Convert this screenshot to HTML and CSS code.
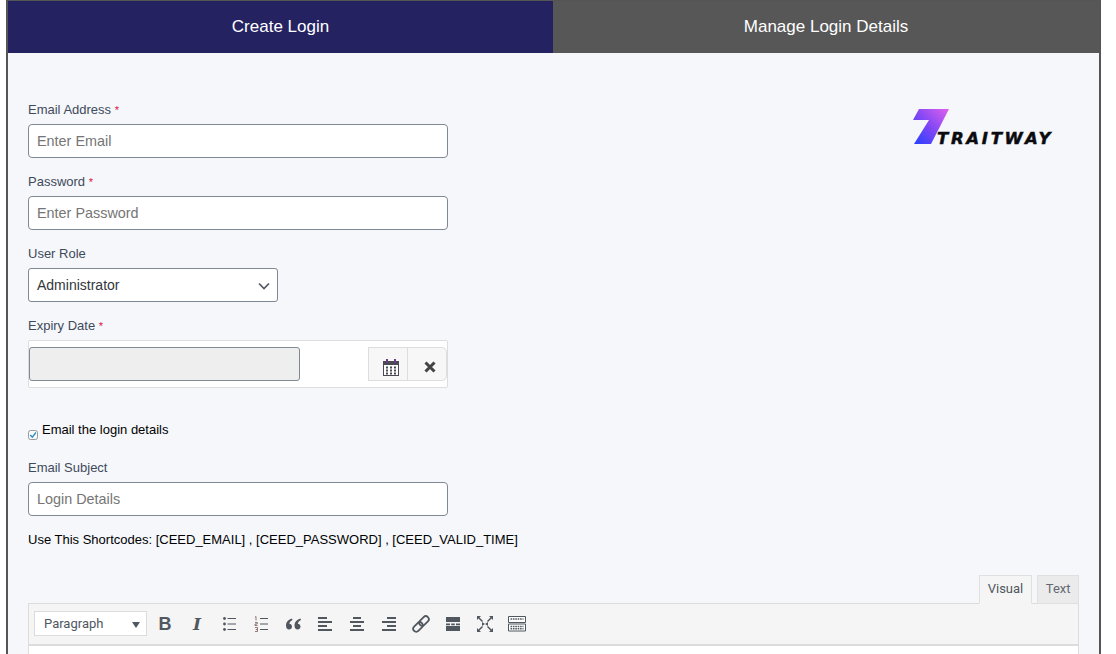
FILE: index.html
```html
<!DOCTYPE html>
<html lang="en">
<head>
<meta charset="utf-8">
<title>Create Login</title>
<link rel="stylesheet" href="styles.css">
</head>
<body>
<div class="panel">
  <nav class="tabs">
    <a class="tab tab-active">Create Login</a>
    <a class="tab">Manage Login Details</a>
  </nav>
  <main class="content">
    <div class="top">
      <form class="form">
        <div class="field">
          <label class="label">Email Address <span class="req">*</span></label>
          <input class="input" type="text" placeholder="Enter Email">
        </div>
        <div class="field">
          <label class="label">Password <span class="req">*</span></label>
          <input class="input" type="text" placeholder="Enter Password">
        </div>
        <div class="field">
          <label class="label">User Role</label>
          <div class="select">Administrator
            <svg class="chev" width="12" height="8" viewBox="0 0 12 8"><path d="M1 1.500l5 5 5-5" fill="none" stroke="#50575e" stroke-width="1.600"/></svg>
          </div>
        </div>
        <div class="field field-date">
          <label class="label">Expiry Date <span class="req">*</span></label>
          <div class="date">
            <input class="date-input" type="text" disabled>
            <div class="date-btns">
              <span class="date-btn">
                <svg width="16" height="18" viewBox="0 0 16 18"><path d="M0 3h16v15H0z" fill="#4a4a55"/><path d="M1 7h14v10H1z" fill="#fff"/><path d="M4 1v4M12 1v4" stroke="#6b3a80" stroke-width="2"/><path d="M3 8.500h2v2H3zM7 8.500h2v2H7zM11 8.500h2v2h-2zM3 11.500h2v2H3zM7 11.500h2v2H7zM11 11.500h2v2h-2zM3 14.500h2v2H3zM7 14.500h2v2H7zM11 14.500h2v2h-2z" fill="#4a4a55"/></svg>
              </span>
              <span class="date-btn">
                <svg width="12" height="12" viewBox="0 0 12 12"><path d="M1.500 1.500l9 9M10.500 1.500l-9 9" stroke="#444" stroke-width="3"/></svg>
              </span>
            </div>
          </div>
        </div>
        <div class="check-row">
          <svg class="check" width="10" height="10" viewBox="0 0 11 11"><rect x=".5" y=".5" width="10" height="10" rx="2.500" fill="#f8f9fb" stroke="#8c8f94"/><path d="M2.500 5.500l2.200 2.300 4-5" fill="none" stroke="#2f8fc0" stroke-width="1.500"/></svg>
          <span class="check-text">Email the login details</span>
        </div>
        <div class="field">
          <label class="label">Email Subject</label>
          <input class="input" type="text" placeholder="Login Details">
        </div>
        <p class="shortcodes">Use This Shortcodes: [CEED_EMAIL] , [CEED_PASSWORD] , [CEED_VALID_TIME]</p>
      </form>
      <div class="logo">
        <svg class="logo-mark" width="38" height="38" viewBox="0 0 38 38">
          <defs><linearGradient id="lg" x1="1" y1="0" x2="0" y2="1"><stop offset="0" stop-color="#e062ee"/><stop offset=".55" stop-color="#7a45f5"/><stop offset="1" stop-color="#2340ff"/></linearGradient></defs>
          <path d="M7 1h30L19 36H2L17 12H1z" fill="url(#lg)"/>
        </svg>
        <span class="logo-text">TRAITWAY</span>
      </div>
    </div>
    <section class="editor">
      <div class="ed-tabs">
        <span class="ed-tab ed-tab-active">Visual</span>
        <span class="ed-tab">Text</span>
      </div>
      <div class="toolbar">
        <div class="format">Paragraph<span class="format-arrow"></span></div>
        <span class="tool tool-b">B</span>
        <span class="tool tool-i">I</span>
        <span class="tool"><svg width="20" height="20" viewBox="0 0 20 20"><path d="M8.500 4.500H17M8.500 10H17M8.500 15.500H17" stroke="#50575e"/><circle cx="5.500" cy="4.500" r="1.400" fill="#50575e"/><circle cx="5.500" cy="10" r="1.400" fill="#50575e"/><circle cx="5.500" cy="15.500" r="1.400" fill="#50575e"/></svg></span>
        <span class="tool"><svg width="20" height="20" viewBox="0 0 20 20"><path d="M9 4.500h8M9 10h8M9 15.500h8" stroke="#50575e"/><path d="M5 2.500v4M4 3.200l1-.7M4 8.500h2.300v1.500H4v1.500h2.500M4 13.500h2.500v4H4M4.800 15.500h1.700" fill="none" stroke="#7a5a55" stroke-width=".8"/></svg></span>
        <span class="tool"><svg width="20" height="20" viewBox="0 0 20 20"><path d="M9 4.500C5.500 5.500 3 8 3 11.500 3 14 4.300 15.500 6 15.500s3-1.300 3-3-1.200-2.800-2.700-2.800C6.700 8 7.800 6.800 9.500 6zM17.500 4.500C14 5.500 11.500 8 11.500 11.500c0 2.500 1.300 4 3 4s3-1.300 3-3-1.200-2.800-2.700-2.800c.4-1.700 1.500-2.900 3.200-3.700z" fill="#50575e"/></svg></span>
        <span class="tool"><svg width="20" height="20" viewBox="0 0 20 20"><path d="M3 3h9v2H3zM3 7h14v2H3zM3 11h9v2H3zM3 15h14v2H3z" fill="#50575e"/></svg></span>
        <span class="tool"><svg width="20" height="20" viewBox="0 0 20 20"><path d="M6 3h8v2H6zM3 7h14v2H3zM6 11h8v2H6zM3 15h14v2H3z" fill="#50575e"/></svg></span>
        <span class="tool"><svg width="20" height="20" viewBox="0 0 20 20"><path d="M8 3h9v2H8zM3 7h14v2H3zM8 11h9v2H8zM3 15h14v2H3z" fill="#50575e"/></svg></span>
        <span class="tool"><svg width="20" height="20" viewBox="0 0 20 20"><g fill="none" stroke="#50575e" stroke-width="1.800"><rect x="1.500" y="10" width="11" height="6" rx="3" transform="rotate(-45 7 13)"/><rect x="7.500" y="4" width="11" height="6" rx="3" transform="rotate(-45 13 7)"/></g></svg></span>
        <span class="tool"><svg width="20" height="20" viewBox="0 0 20 20"><path d="M3 3h14v5H3zM3 12h14v5H3zM3 9.500h4v1.700H3zM8.200 9.500h3.600v1.700H8.200zM13 9.500h4v1.700h-4z" fill="#50575e"/></svg></span>
        <span class="tool"><svg width="20" height="20" viewBox="0 0 20 20"><path d="M7 8l3 2 3-2v4l-3-2-3 2z" fill="#50575e"/><path d="M7.500 7.500L3.500 3.500M12.500 7.500l4-4M7.500 12.500l-4 4M12.500 12.500l4 4" stroke="#50575e" stroke-width="1.500"/><path d="M2 2h4L2 6zM18 2v4l-4-4zM2 18v-4l4 4zM18 18h-4l4-4z" fill="#50575e"/></svg></span>
        <span class="tool"><svg width="20" height="20" viewBox="0 0 20 20"><path d="M1.500 2.500h17v6h-17zM1.500 10h17v7h-17z" fill="#fff" stroke="#50575e"/><path d="M3.500 5h13M3.500 12.500h13M3.500 14.800h13" stroke="#50575e" stroke-width="1.500" stroke-dasharray="1.600 .8"/></svg></span>
      </div>
      <div class="ed-body"></div>
    </section>
  </main>
</div>
</body>
</html>
```
FILE: styles.css
```css
* { box-sizing: border-box; }
html, body { margin: 0; height: 654px; overflow: hidden; background: #fff; }
body { font-family: "Liberation Sans", Arial, sans-serif; }
.panel {
  margin-left: 6px;
  width: 1095px;
  height: 654px;
  border: 2px solid #555;
  border-top-width: 1px;
  border-bottom: 0;
  background: #f5f7fb;
  overflow: hidden;
}
.tabs { display: grid; grid-template-columns: 545px 1fr; height: 52px; }
.tab {
  display: flex;
  align-items: center;
  justify-content: center;
  color: #fff;
  font-size: 17px;
  background: #575757;
}
.tab-active { background: #252262; }
.content { padding: 46px 20px 0; }
.top { display: flex; justify-content: space-between; }
.form { width: 420px; }
.field { margin-bottom: 13px; }
.field-date { margin-bottom: 33px; }
.label {
  display: block;
  height: 21px;
  margin-bottom: 4px;
  font: 13px/21px "Liberation Sans", sans-serif;
  color: #3f4a5a;
}
.req { color: #e0103a; font-size: 11px; }
.input {
  display: block;
  width: 100%;
  height: 34px;
  padding: 0 8px;
  border: 1px solid #7e8993;
  border-radius: 4px;
  background: #fff;
  font: 14.400px "Liberation Sans", sans-serif;
  color: #32373c;
}
.input::placeholder { color: #757575; opacity: 1; }
.select {
  position: relative;
  display: flex;
  align-items: center;
  width: 250px;
  height: 34px;
  padding: 0 8px;
  border: 1px solid #7e8993;
  border-radius: 3px;
  background: #fff;
  font: 14px "Liberation Sans", sans-serif;
  color: #32373c;
}
.chev { position: absolute; right: 7px; top: 13px; }
.date {
  display: flex;
  justify-content: space-between;
  height: 48px;
  padding: 6px 0;
  border: 1px solid #ddd;
  border-radius: 2px;
  background: #fff;
}
.date-input {
  width: 271px;
  height: 34px;
  border: 1px solid #7e8993;
  border-radius: 3px;
  background: #eee;
}
.date-btns { display: flex; }
.date-btn {
  display: flex;
  align-items: center;
  justify-content: center;
  width: 40px;
  height: 34px;
  padding: 6px 0 0 6px;
  border: 1px solid #ddd;
  background: #f7f7f7;
}
.date-btn + .date-btn { margin-left: -1px; border-radius: 0 5px 5px 0; }
.check-row { display: flex; align-items: flex-start; height: 36px; }
.check { margin-top: 9px; }
.check-text { margin: 1px 0 0 4px; font-size: 13px; line-height: 16px; color: #000; }
.shortcodes { margin: 0; padding-top: 1px; font-size: 13px; line-height: 20px; color: #000; white-space: nowrap; }
.logo { position: relative; width: 141px; height: 38px; margin: 9px 26px 0 0; }
.logo-mark { display: block; }
.logo-text {
  position: absolute;
  left: 25px;
  top: 21px;
  font: italic 700 16.500px/20px "DejaVu Sans", sans-serif;
  letter-spacing: 2.700px;
  -webkit-text-stroke: .5px #0b0b0f;
  color: #0b0b0f;
  white-space: nowrap;
}
.editor { margin-top: 25px; }
.ed-tabs { display: flex; justify-content: flex-end; gap: 5px; height: 29px; margin-bottom: -1px; }
.ed-tab {
  height: 29px;
  padding: 0 7.500px;
  border: 1px solid #e0e0e0;
  background: #ebebeb;
  font: 13px/26px Roboto, sans-serif;
  color: #646970;
}
.ed-tab-active { padding: 0 8px; border-bottom-color: #f5f5f5; background: #f5f5f5; color: #50575e; position: relative; }
.toolbar {
  display: flex;
  align-items: center;
  height: 43px;
  padding: 0 6px 1px 5px;
  border: 1px solid #dcdcde;
  border-bottom: 2px solid #dcdcde;
  background: #f5f5f5;
}
.format {
  position: relative;
  width: 113px;
  height: 25px;
  margin-right: 2px;
  padding-left: 9px;
  border: 1px solid #dcdcde;
  background: #fff;
  font: 13px/23px Roboto, sans-serif;
  color: #50575e;
}
.format-arrow {
  position: absolute;
  right: 6px;
  top: 10px;
  border: 4.500px solid transparent;
  border-top: 6px solid #50575e;
  border-bottom: 0;
}
.tool {
  display: flex;
  align-items: center;
  justify-content: center;
  width: 32px;
  height: 28px;
  color: #50575e;
}
.tool-b { padding-top: 2px; font: 700 18px "Liberation Sans", sans-serif; }
.tool-i { font: italic 700 17px "DejaVu Serif", serif; }
.ed-body { height: 60px; border: 1px solid #dcdcde; border-top: 0; background: #fff; }
```
